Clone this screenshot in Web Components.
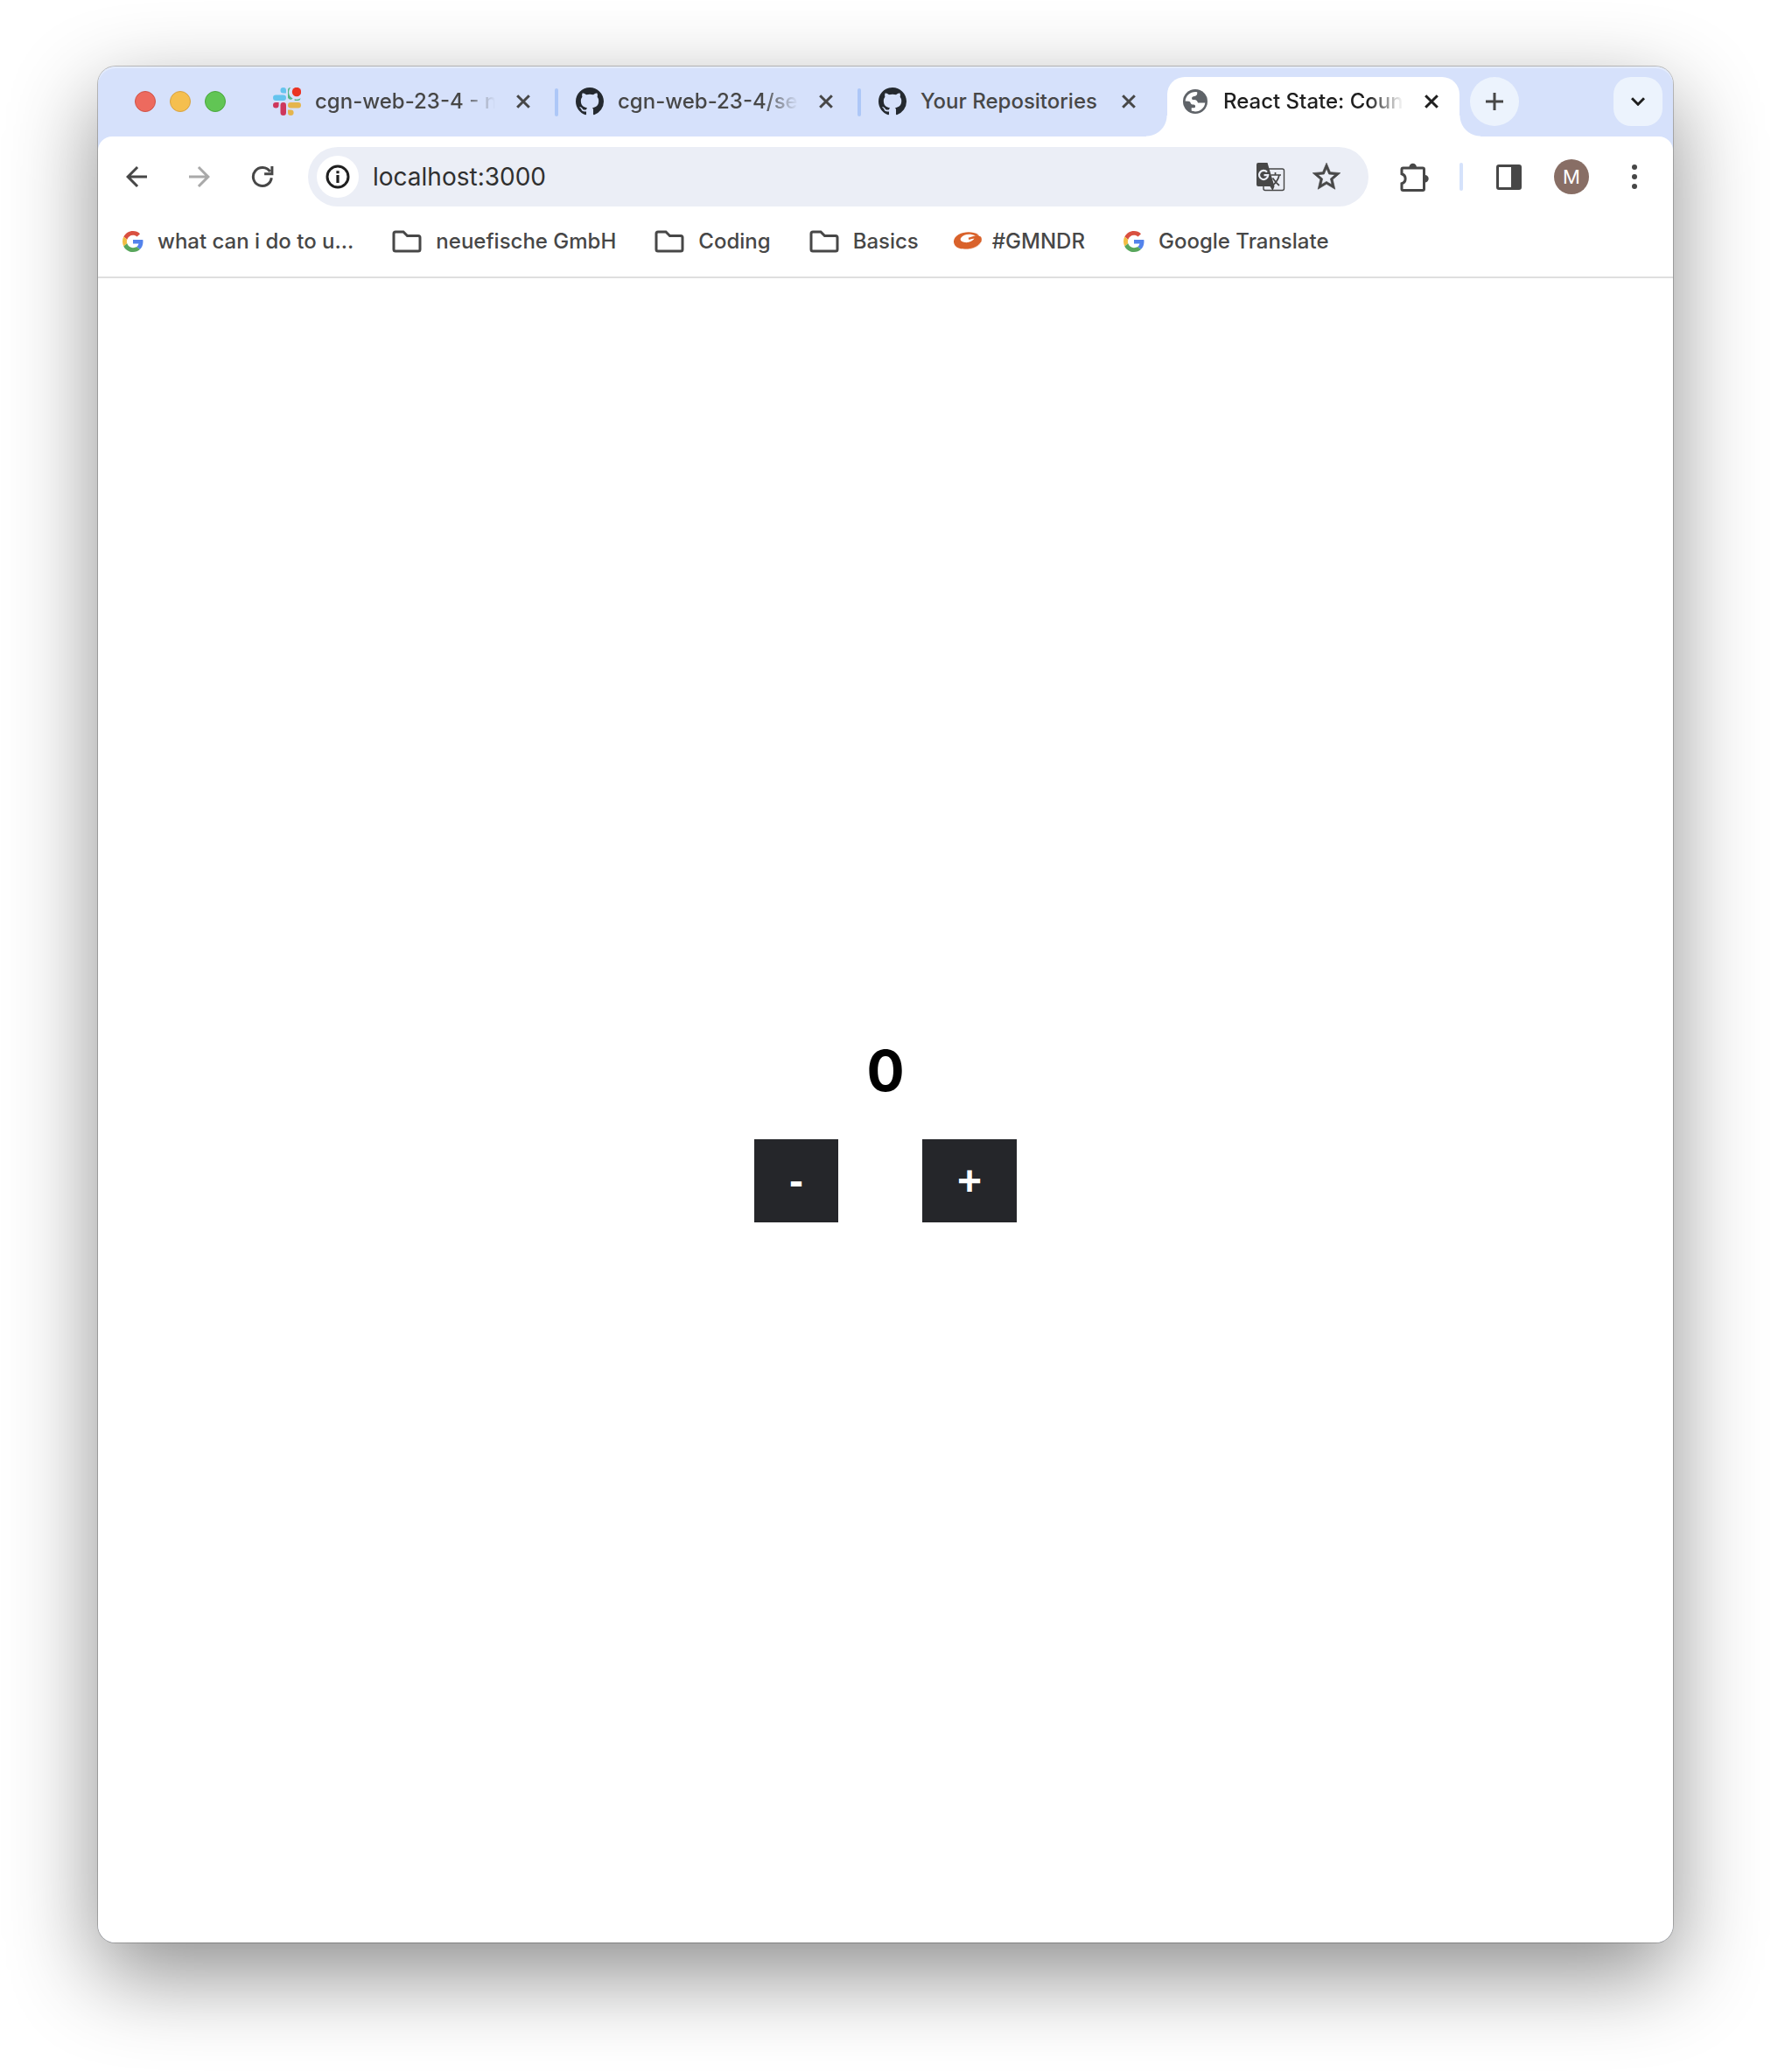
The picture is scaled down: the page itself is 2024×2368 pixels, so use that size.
<!DOCTYPE html>
<html lang="en">
<head>
<meta charset="utf-8">
<title>React State: Counter</title>
<style>
  html, body { margin: 0; background: #fff; }
  body {
    box-sizing: border-box;
    min-height: 100vh;
    padding: 76px 112px 148px;
    display: flex;
    flex-direction: column;
    overflow-x: hidden;
    font-family: Inter, "Liberation Sans", sans-serif;
    color: #474747;
  }
  browser-window { flex: 1; }
</style>
</head>
<body>
<browser-window>
  <tab-strip slot="tabs">
    <browser-tab icon="slack" fade>cgn-web-23-4 - n</browser-tab>
    <browser-tab icon="github" fade>cgn-web-23-4/ses</browser-tab>
    <browser-tab icon="github">Your Repositories</browser-tab>
    <browser-tab icon="globe" fade active>React State: Count</browser-tab>
  </tab-strip>
  <tool-bar slot="toolbar"></tool-bar>
  <bookmark-bar slot="bookmarks">
    <bookmark-item icon="google">what can i do to u...</bookmark-item>
    <bookmark-item icon="folder">neuefische GmbH</bookmark-item>
    <bookmark-item icon="folder">Coding</bookmark-item>
    <bookmark-item icon="folder">Basics</bookmark-item>
    <bookmark-item icon="gmndr">#GMNDR</bookmark-item>
    <bookmark-item icon="google">Google Translate</bookmark-item>
  </bookmark-bar>
  <counter-app></counter-app>
</browser-window>

<script>
const define = (name, html, setup) => {
  const template = document.createElement('template');
  template.innerHTML = html;
  customElements.define(name, class extends HTMLElement {
    connectedCallback() {
      if (this.shadowRoot) return;
      this.attachShadow({ mode: 'open' }).append(template.content.cloneNode(true));
      if (setup) setup(this, this.shadowRoot);
    }
  });
};

/* name: [width, height, viewBox, markup] */
const ICONS = {
  slack: [32, 32, '0 0 32 32', `
    <path fill="#65c4ee" d="M11.8 0a3.2 3.2 0 0 1 3.2 3.3V6.6h-3.2a3.3 3.3 0 0 1 0-6.6z"/><rect fill="#65c4ee" x="0" y="8.5" width="15" height="6.5" rx="3.25"/>
    <rect fill="#ce375c" x="8.5" y="17" width="6.5" height="15" rx="3.25"/><path fill="#ce375c" d="M0 20.3A3.3 3.3 0 0 1 3.3 17H6.6v3.3a3.3 3.3 0 0 1-6.6 0z"/>
    <rect fill="#e5b54d" x="17" y="17" width="15" height="6.5" rx="3.25"/><path fill="#e5b54d" d="M17 25.4h3.3a3.3 3.3 0 1 1-3.3 3.3z"/>
    <path fill="#55b685" d="M17 3.3A3.2 3.2 0 0 1 20.2 0 8 8 0 0 0 22.6 12.6 3.3 3.3 0 0 1 17 11.8zM24.6 13.2a8 8 0 0 0 7-.9 3.2 3.2 0 0 1-2.9 2.7h-4z"/>
    <circle cx="27" cy="5" r="5.2" fill="#ea3323"/>`],
  github: [32, 32, '0 0 16 16', `<path fill="#24292f" d="M8 0C3.58 0 0 3.58 0 8c0 3.54 2.29 6.53 5.47 7.59.4.07.55-.17.55-.38 0-.19-.01-.82-.01-1.49-2.01.37-2.53-.49-2.69-.94-.09-.23-.48-.94-.82-1.13-.28-.15-.68-.52-.01-.53.63-.01 1.08.58 1.23.82.72 1.21 1.87.87 2.33.66.07-.52.28-.87.51-1.07-1.78-.2-3.64-.89-3.64-3.95 0-.87.31-1.59.82-2.15-.08-.2-.36-1.02.08-2.12 0 0 .67-.21 2.2.82.64-.18 1.32-.27 2-.27s1.36.09 2 .27c1.53-1.04 2.2-.82 2.2-.82.44 1.1.16 1.92.08 2.12.51.56.82 1.27.82 2.15 0 3.07-1.87 3.75-3.65 3.95.29.25.54.73.54 1.48 0 1.07-.01 1.93-.01 2.2 0 .21.15.46.55.38A8.01 8.01 0 0 0 16 8c0-4.42-3.58-8-8-8z"/>`],
  globe: [28, 28, '0 0 28 28', `<circle cx="14" cy="14" r="14" fill="#5f6368"/>
    <path fill="#fff" d="M2.6 13.6C3 7.6 8 3 14.5 3l1.7.2C16.8 6 15.5 7.5 13 8c-1.8.4-2.9.8-2.9 2.2 0 1.5.6 1.8 2.7 1.9 2.6.2 3.6 1.6 4.2 3.3h8.3C24.7 21 20 25.4 14 25.4c-1.8 0-3.4-.4-4.3-.9v-3.3h3c1.3 0 1.5-1.1 1.3-2.2-.2-1.3-1.3-1.6-3.1-1.6C9.5 17.4 8.9 16.5 8.6 15.5 8.3 14.4 7.5 13.9 6.4 13.8z"/>`],
  close: [16, 16, '0 0 16 16', `<path d="M1.2 1.2l13.6 13.6M14.8 1.2L1.2 14.8" stroke="currentColor" stroke-width="3" fill="none"/>`],
  plus: [20, 20, '0 0 20 20', `<path d="M10 0v20M0 10h20" stroke="currentColor" stroke-width="3" fill="none"/>`],
  chevron: [16, 10, '0 0 16 10', `<path d="M1 1.2l7 7 7-7" stroke="currentColor" stroke-width="3" fill="none"/>`],
  back: [36, 36, '0 0 24 24', `<path fill="currentColor" d="M20 11H7.83l5.59-5.59L12 4l-8 8 8 8 1.41-1.41L7.83 13H20v-2z"/>`],
  forward: [36, 36, '0 0 24 24', `<path fill="currentColor" d="M4 11h12.17l-5.59-5.59L12 4l8 8-8 8-1.41-1.41L16.17 13H4v-2z"/>`],
  reload: [26, 26, '-1 -1 26 26', `<path d="M22.3 13.3A10.5 10.5 0 1 1 20.6 6.2M22.9 0v8.8h-8.8" stroke="currentColor" stroke-width="3" fill="none"/>`],
  info: [28, 28, '0 0 28 28', `<circle cx="14" cy="14" r="12" fill="none" stroke="#1f1f1f" stroke-width="3"/><path fill="#1f1f1f" d="M12.4 12h3.2v9h-3.2zM12.4 7.2h3.2v3.1h-3.2z"/>`],
  translate: [34, 34, '-1 -1 34 34', `<rect x="8" y="7" width="23.5" height="24.5" rx="2" fill="none" stroke="#474747" stroke-width="1.4"/>
    <path fill="#474747" d="M2 0H12.5L20.5 27 18.5 32 15.5 27H2a2 2 0 0 1-2-2V2a2 2 0 0 1 2-2z"/>
    <path d="M12 10.6A5.1 5.1 0 1 0 13.2 14.2H8.5" fill="none" stroke="#ebeef6" stroke-width="2.2"/>
    <path d="M16.5 14h11.5M21.5 11v3M26 14c-1 5-4 9-8 12.5M18.5 17.5c2 3 4.5 6 7.5 8.5" fill="none" stroke="#474747" stroke-width="1.7"/>`],
  star: [38, 38, '0 0 24 24', `<path fill="#474747" stroke="#474747" stroke-width=".4" d="M22 9.24l-7.19-.62L12 2 9.19 8.63 2 9.24l5.46 4.73L5.82 21 12 17.27 18.18 21l-1.63-7.03L22 9.24zM12 15.4l-3.76 2.27 1-4.28-3.32-2.88 4.38-.38L12 6.1l1.71 4.04 4.38.38-3.32 2.88 1 4.28L12 15.4z"/>`],
  puzzle: [34, 34, '0 0 34 34', `<path d="M4.5 7h22.5a1.5 1.5 0 0 1 1.5 1.5V31a1.5 1.5 0 0 1-1.5 1.5H4.5A1.5 1.5 0 0 1 3 31v-6.2c5.5-1.8 5.5-9.3 0-11.1V8.5A1.5 1.5 0 0 1 4.5 7z" fill="none" stroke="#474747" stroke-width="3"/><path fill="#474747" d="M11.5 6a4.2 4.2 0 0 1 8.4 0zM29.5 15a4.2 4.2 0 0 1 0 8.4z"/>`],
  panel: [29, 29, '0 0 29 29', `<rect x="1.5" y="1.5" width="26" height="26" rx="1.5" fill="none" stroke="#474747" stroke-width="3"/><path fill="#474747" d="M17 2h11v25H17z"/>`],
  dots: [8, 28, '0 0 8 28', `<g fill="#474747"><circle cx="4" cy="3" r="3"/><circle cx="4" cy="14" r="3"/><circle cx="4" cy="25" r="3"/></g>`],
  google: [24, 24, '0 0 48 48', `<path fill="#d95040" d="M24 9.5c3.54 0 6.71 1.22 9.21 3.6l6.85-6.85C35.9 2.38 30.47 0 24 0 14.62 0 6.51 5.38 2.56 13.22l7.98 6.19C12.43 13.72 17.74 9.5 24 9.5z"/><path fill="#5383ec" d="M46.98 24.55c0-1.57-.15-3.09-.38-4.55H24v9.02h12.94c-.58 2.96-2.26 5.48-4.78 7.18l7.73 6c4.51-4.18 7.09-10.36 7.09-17.65z"/><path fill="#f2bd42" d="M10.53 28.59c-.48-1.45-.76-2.99-.76-4.59s.27-3.14.76-4.59l-7.98-6.19C.92 16.46 0 20.12 0 24c0 3.88.92 7.54 2.56 10.78l7.97-6.19z"/><path fill="#58a65c" d="M24 48c6.48 0 11.93-2.13 15.89-5.81l-7.73-6c-2.15 1.45-4.92 2.3-8.16 2.3-6.26 0-11.57-4.22-13.47-9.91l-7.98 6.19C6.51 42.62 14.62 48 24 48z"/>`],
  folder: [34, 26, '0 0 34 26', `<path d="M4 2h9l4.5 4.5H30A2 2 0 0 1 32 8.5V22a2 2 0 0 1-2 2H4a2 2 0 0 1-2-2V4a2 2 0 0 1 2-2z" fill="none" stroke="#474747" stroke-width="3"/>`],
  gmndr: [32, 22, '0 0 32 22', `<path fill="#d9622b" d="M28 3C22-.8 12-.8 5.5 3-1.5 7-1.5 14 3.5 17.5 8 20.500 17 21 24 18c6.500-2.800 9.500-8.200 7-12.500L28.500 4.600 17 7.800l6.500-.2c-1.500 2.900-6 4.900-10.500 4.500-4.800-.4-6.600-3-4.500-5.700C11 2.900 18.500 1.300 25 4.500z"/><path d="M17 7.800L28.500 4.300" stroke="#d9622b" stroke-width="2.400"/><path d="M9 19.500c10 1.500 18-1.500 22-7.500" stroke="#fff" stroke-width=".6" fill="none"/>`]
};

customElements.define('ui-icon', class extends HTMLElement {
  connectedCallback() {
    if (this.shadowRoot) return;
    const [w, h, box, body] = ICONS[this.getAttribute('name')];
    this.attachShadow({ mode: 'open' }).innerHTML =
      `<style>:host{display:inline-flex;flex:none}svg{display:block}</style>
       <svg width="${w}" height="${h}" viewBox="${box}" aria-hidden="true">${body}</svg>`;
  }
});

define('browser-tab', `
  <style>
    :host { display: flex; align-items: center; flex: 0 1 334px; min-width: 0; box-sizing: border-box;
      height: 68px; padding: 0 16px 12px; gap: 16px; position: relative; color: #474747; }
    :host([active]) { background: #fff; border-radius: 20px 20px 0 0; color: #1f1f1f; }
    :host([active])::before, :host([active])::after {
      content: ""; position: absolute; bottom: 0; width: 24px; height: 24px; }
    :host([active])::before { right: 100%; background: radial-gradient(circle at 0 0, transparent 23px, #fff 24px); }
    :host([active])::after { left: 100%; background: radial-gradient(circle at 100% 0, transparent 23px, #fff 24px); }
    .icon { flex: 0 0 32px; display: flex; justify-content: center; }
    .title { flex: 1; min-width: 0; overflow: hidden; white-space: nowrap; font-size: 24px; line-height: 32px; font-weight: 500; }
    :host([fade]) .title { mask-image: linear-gradient(to right, #000 calc(100% - 40px), transparent); }
    button { flex: 0 0 32px; height: 32px; padding: 0; border: 0; background: none; color: inherit;
      display: flex; align-items: center; justify-content: center; }
  </style>
  <span class="icon"></span>
  <span class="title"><slot></slot></span>
  <button type="button" aria-label="Close tab"><ui-icon name="close"></ui-icon></button>`,
  (host, root) => {
    host.setAttribute('role', 'tab');
    const icon = document.createElement('ui-icon');
    icon.setAttribute('name', host.getAttribute('icon'));
    root.querySelector('.icon').append(icon);
  });

define('tab-strip', `
  <style>
    :host { display: flex; padding: 12px 12px 0 42px; border-radius: 20px 20px 0 0; box-shadow: inset 0 2px 0 #e4ecfd; }
    .lights { flex: none; display: flex; gap: 16px; height: 56px; align-items: center; margin-right: 38px; }
    .lights button { width: 24px; height: 24px; padding: 0; border-radius: 50%; border-width: 1px; border-style: solid; }
    .red { background: #ed6a5e; border-color: #cf5347; }
    .yellow { background: #f5bf4f; border-color: #d6a243; }
    .green { background: #61c554; border-color: #4aa73c; }
    .tabs { display: flex; flex: 0 1 1372px; min-width: 0; }
    ::slotted(browser-tab:not(:last-child)) { margin-right: 12px; }
    ::slotted(browser-tab[divided])::after { content: ""; position: absolute; left: calc(100% + 4px); top: 13px;
      width: 4px; height: 32px; border-radius: 2px; background: #adc7f7; }
    .round { flex: none; width: 56px; height: 56px; padding: 0; border: 0; background: #ecf3fd; color: #474747;
      display: flex; align-items: center; justify-content: center; }
    .new { border-radius: 50%; margin-left: 12px; }
    .search { border-radius: 20px; margin-left: auto; color: #1f1f1f; }
  </style>
  <div class="lights">
    <button class="red" type="button" aria-label="Close"></button>
    <button class="yellow" type="button" aria-label="Minimize"></button>
    <button class="green" type="button" aria-label="Zoom"></button>
  </div>
  <div class="tabs" role="tablist"><slot></slot></div>
  <button class="round new" type="button" aria-label="New tab"><ui-icon name="plus"></ui-icon></button>
  <button class="round search" type="button" aria-label="Search tabs"><ui-icon name="chevron"></ui-icon></button>`,
  host => {
    /* a divider follows every tab that is not next to the active one */
    const tabs = [...host.children];
    tabs.forEach((tab, i) => {
      if (tabs[i + 1] && !tabs[i + 1].hasAttribute('active')) tab.setAttribute('divided', '');
    });
  });

define('tool-bar', `
  <style>
    :host { display: flex; align-items: center; padding: 12px 20px 12px 8px; }
    button { flex: 0 0 72px; height: 56px; padding: 0; border: 0; background: none; color: #474747;
      display: flex; align-items: center; justify-content: center; }
    button[disabled] { color: #a9a9a9; }
    .omnibox { flex: 1; min-width: 0; height: 68px; box-sizing: border-box; margin-left: 16px; padding: 0 16px 0 10px;
      border-radius: 34px; background: #ebeef6; display: flex; align-items: center; }
    .omnibox button { flex-basis: 64px; }
    .omnibox .info { flex-basis: 48px; height: 48px; border-radius: 50%; background: #fff; }
    input { flex: 1; min-width: 0; height: 40px; margin: 0 0 0 16px; padding: 0; border: 0; outline: 0;
      font: 400 28px/40px Inter, "Liberation Sans", sans-serif;
      color: #303030; background: none; }
    .ext { margin-left: 16px; }
    .rule { flex: 0 0 4px; height: 32px; margin: 0 16px; border-radius: 2px; background: #d5e2fb; }
    .avatar span { width: 40px; height: 40px; border-radius: 50%; background: #886e65; color: #fff;
      font: 400 22px/40px Inter, "Liberation Sans", sans-serif; }
    .menu { flex-basis: 48px; margin-left: 12px; }
  </style>
  <button type="button" aria-label="Back"><ui-icon name="back"></ui-icon></button>
  <button type="button" aria-label="Forward" disabled><ui-icon name="forward"></ui-icon></button>
  <button type="button" aria-label="Reload"><ui-icon name="reload"></ui-icon></button>
  <div class="omnibox">
    <button class="info" type="button" aria-label="Site information"><ui-icon name="info"></ui-icon></button>
    <input type="text" aria-label="Address" value="localhost:3000">
    <button type="button" aria-label="Translate"><ui-icon name="translate"></ui-icon></button>
    <button type="button" aria-label="Bookmark"><ui-icon name="star"></ui-icon></button>
  </div>
  <button class="ext" type="button" aria-label="Extensions"><ui-icon name="puzzle"></ui-icon></button>
  <span class="rule"></span>
  <button type="button" aria-label="Side panel"><ui-icon name="panel"></ui-icon></button>
  <button class="avatar" type="button" aria-label="Profile"><span>M</span></button>
  <button class="menu" type="button" aria-label="Menu"><ui-icon name="dots"></ui-icon></button>`);

define('bookmark-item', `
  <style>
    :host { display: block; }
    a, button { display: flex; align-items: center; gap: 12px; height: 56px; padding: 0; border: 0; background: none;
      font: 500 24px/32px Inter, "Liberation Sans", sans-serif; color: #474747; text-decoration: none; white-space: nowrap; }
    .icon { flex: 0 0 32px; display: flex; justify-content: center; }
    button { gap: 16px; margin-left: 4px; }
  </style>`,
  (host, root) => {
    const name = host.getAttribute('icon');
    const box = document.createElement(name === 'folder' ? 'button' : 'a');
    if (name === 'folder') box.type = 'button'; else box.href = '#';
    box.innerHTML = `<span class="icon"><ui-icon name="${name}"></ui-icon></span><span><slot></slot></span>`;
    root.append(box);
  });

define('bookmark-bar', `
  <style>
    :host { display: flex; gap: 40px; padding: 0 24px 12px; border-bottom: 2px solid #dfdfdf; overflow: hidden; }
  </style><slot></slot>`);

define('counter-app', `
  <style>
    :host { flex: 1; display: flex; flex-direction: column; align-items: center; justify-content: center; color: #000; }
    h1 { margin: 45px 0 40px; font-size: 64px; line-height: 76px; font-weight: 700; }
    div { display: flex; gap: 96px; }
    button { padding: 20px 40px; border: 0; border-radius: 0; background: #25262a; color: #fff;
      font: 700 48px/55px "Liberation Sans", Arial, sans-serif; }
  </style>
  <h1>0</h1>
  <div><button type="button" id="minus">-</button><button type="button" id="plus">+</button></div>`,
  (host, root) => {
    const value = root.querySelector('h1');
    root.querySelector('#minus').onclick = () => value.textContent--;
    root.querySelector('#plus').onclick = () => value.textContent++;
  });

define('browser-window', `
  <style>
    :host { display: flex; flex-direction: column; border-radius: 20px; background: #d6e1fb;
      box-shadow: 0 0 0 1px rgba(0,0,0,.22), 0 36px 100px rgba(0,0,0,.45); }
    header { display: block; }
    .chrome { background: #fff; border-radius: 16px 16px 0 0; }
    main { flex: 1; display: flex; flex-direction: column; background: #fff; border-radius: 0 0 20px 20px; }
  </style>
  <header><slot name="tabs"></slot></header>
  <div class="chrome"><slot name="toolbar"></slot><slot name="bookmarks"></slot></div>
  <main><slot></slot></main>`);
</script>
</body>
</html>
